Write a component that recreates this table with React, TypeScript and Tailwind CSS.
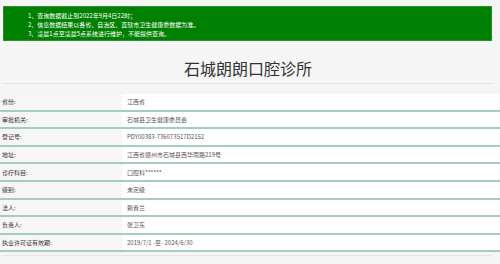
import React from 'react';

const notices = [
  '1、查询数据截止到2022年9月4日22时；',
  '2、信息数据结果以各省、自治区、直辖市卫生健康委数据为准。',
  '3、凌晨1点至凌晨5点系统进行维护，不能提供查询。',
];

const rows: [string, string][] = [
  ['省份:', '江西省'],
  ['审批机关:', '石城县卫生健康委员会'],
  ['登记号:', 'PDY00383-736073517D2152'],
  ['地址:', '江西省赣州市石城县西华南路219号'],
  ['诊疗科目:', '口腔科******'],
  ['级别:', '未定级'],
  ['法人:', '赖春兰'],
  ['负责人:', '张卫东'],
  ['执业许可证有效期:', '2019/7/1 -至- 2024/6/30'],
];

export default function App() {
  return (
    <div
      className="w-[500px] h-[264px] overflow-hidden bg-[#f5f5f5] flex flex-col"
      style={{ fontFamily: '"Noto Sans CJK SC", "Liberation Sans", sans-serif' }}
    >
      <div className="h-[6px] shrink-0" />

      {/* 提示 */}
      <div className="px-[3px] shrink-0">
        <div className="h-[35px] w-[489px] bg-[#008000] border border-[#2f8f2f] pl-[24px] pt-[4px]">
          {notices.map((n) => (
            <p key={n} className="text-[6px] leading-[9px] text-white">
              {n}
            </p>
          ))}
        </div>
      </div>

      {/* 标题 */}
      <div className="px-[3px] shrink-0">
        <h1 className="h-[43px] pt-[15px] text-center text-[16px] leading-[24px] text-[#333] border-b border-[#e6e6e6] w-[490px]">
          石城朗朗口腔诊所
        </h1>
      </div>

      {/* 信息表 */}
      <div className="mt-[10px] shrink-0">
        {rows.map(([label, value]) => (
          <div
            key={label}
            className="flex h-[17.6px] border-b-2 border-[#a6cdb9]"
          >
            <div className="w-[122px] bg-[#f6f6f6] pl-[2px] flex items-center text-[6px] text-[#333]">
              {label}
            </div>
            <div className="w-[377px] bg-white pl-[5px] flex items-center text-[6px] text-[#555]">
              {value}
            </div>
          </div>
        ))}
      </div>

      <div className="px-[3px] pt-[3px] shrink-0">
        <div className="w-[489px] border-b border-[#e6e6e6]" />
      </div>
    </div>
  );
}
